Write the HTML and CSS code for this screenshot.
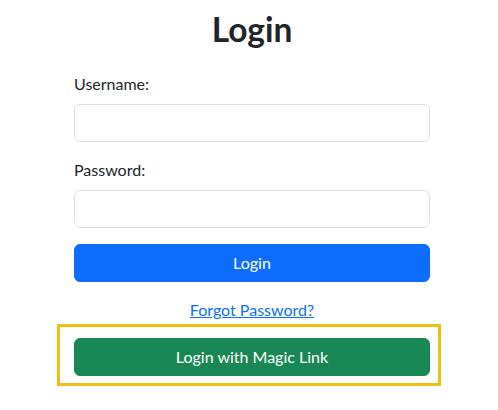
FILE: index.html
```html
<!DOCTYPE html>
<html lang="en">
<head>
<meta charset="utf-8">
<title>Login</title>
<link rel="stylesheet" href="styles.css">
</head>
<body>
<main class="container">
  <h1 class="title">Login</h1>
  <form class="login-form">
    <div class="field">
      <label class="label" for="username">Username:</label>
      <input class="input" type="text" id="username">
    </div>
    <div class="field">
      <label class="label" for="password">Password:</label>
      <input class="input" type="password" id="password">
    </div>
    <button type="button" class="btn btn-primary">Login</button>
  </form>
  <div class="forgot"><a href="#" class="link">Forgot Password?</a></div>
  <div class="highlight">
    <button type="button" class="btn btn-success">Login with Magic Link</button>
  </div>
</main>
</body>
</html>
```
FILE: styles.css
```css
* { box-sizing: border-box; }
html, body { margin: 0; padding: 0; background: #fff; }
body {
  font-family: Lato, "Liberation Sans", sans-serif;
  font-size: 16px;
  line-height: 24px;
  color: #212529;
}
.container {
  width: 356px;
  margin-left: 74px;
  padding-top: 9px;
}
.title {
  margin: 0 0 23px;
  font-size: 33.5px;
  line-height: 40px;
  font-weight: 700;
  text-align: center;
}
.login-form { margin: 0; }
.field { margin-bottom: 16px; }
.label {
  display: block;
  margin-bottom: 8px;
}
.input {
  display: block;
  width: 100%;
  height: 38px;
  margin: 0;
  padding: 6px 12px;
  border: 1px solid #dee2e6;
  border-radius: 6px;
  background: #fff;
  font: inherit;
  color: #212529;
}
.btn {
  display: block;
  width: 100%;
  height: 38px;
  margin: 0;
  padding: 0 12px;
  border: 1px solid transparent;
  border-radius: 6px;
  font: inherit;
  color: #fff;
  text-align: center;
  cursor: pointer;
}
.btn-primary { background: #0d6efd; border-color: #0d6efd; }
.btn-success { background: #198754; border-color: #198754; }
.forgot {
  margin-top: 16px;
  text-align: center;
}
.link { color: #0d6efd; text-decoration: underline; }
.highlight {
  margin: 2px -11px 0 -17px;
  padding: 11px 8px 7px 14px;
  border: 3px solid #efbf16;
}
```
